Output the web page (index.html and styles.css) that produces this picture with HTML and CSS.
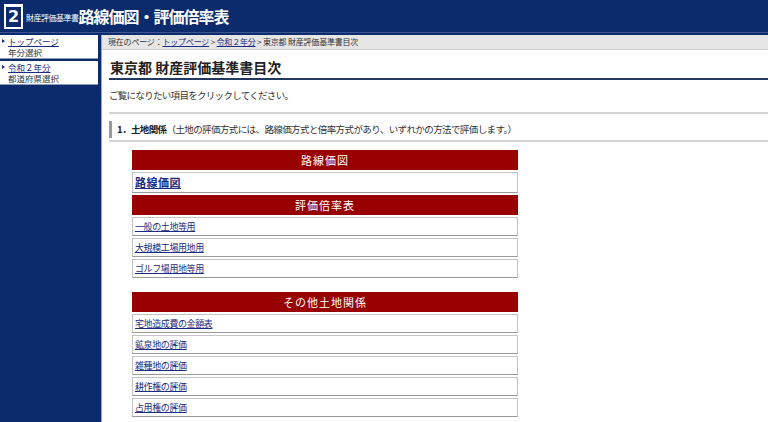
FILE: index.html
```html
<!DOCTYPE html>
<html>
  <head>
    <meta charset="utf-8">
    <title>東京都 財産評価基準書目次</title>
    <link rel="stylesheet" href="styles.css">
  </head>
  <body>
    <div class="header">
      <span class="logo">2</span>
      <span class="subtitle">財産評価基準書</span>
      <span class="title">路線価図・評価倍率表</span>
    </div>

    <div class="wrap">
      <div class="side">
        <div class="navbox">
          <a href="#">トップページ</a>
          <span>年分選択</span>
        </div>
        <div class="navbox">
          <a href="#">令和２年分</a>
          <span>都道府県選択</span>
        </div>
      </div>

      <div class="main">
        <div class="crumb">
          現在のページ：<a href="#">トップページ</a> &gt; <a href="#">令和２年分</a> &gt; 東京都 財産評価基準書目次
        </div>
        <div class="body">
          <h1>東京都 財産評価基準書目次</h1>
          <p class="lead">ご覧になりたい項目をクリックしてください。</p>
          <h2><b>1．土地関係</b>（土地の評価方式には、路線価方式と倍率方式があり、いずれかの方法で評価します。）</h2>

          <div class="group">
            <div class="cap">路線価図</div>
            <div class="row big"><a href="#">路線価図</a></div>
            <div class="cap">評価倍率表</div>
            <div class="row"><a href="#">一般の土地等用</a></div>
            <div class="row"><a href="#">大規模工場用地用</a></div>
            <div class="row"><a href="#">ゴルフ場用地等用</a></div>
          </div>

          <div class="group">
            <div class="cap">その他土地関係</div>
            <div class="row"><a href="#">宅地造成費の金額表</a></div>
            <div class="row"><a href="#">鉱泉地の評価</a></div>
            <div class="row"><a href="#">雑種地の評価</a></div>
            <div class="row"><a href="#">耕作権の評価</a></div>
            <div class="row"><a href="#">占用権の評価</a></div>
          </div>
        </div>
      </div>
    </div>
  </body>
</html>
```

FILE: styles.css
```css
html, body {
  margin: 0;
  padding: 0;
  height: 100%;
}

body {
  background: #0b2b6c;
  font-family: "Noto Sans CJK JP", "Noto Sans", sans-serif;
  color: #333;
  overflow: hidden;
}

a { color: #1a2b80; }

.header {
  height: 33px;
  border-bottom: 1px solid #3a5590;
  display: flex;
  align-items: center;
  color: #fff;
  padding-left: 4px;
  box-sizing: border-box;
}
.header .logo {
  width: 15px;
  height: 20px;
  border: 2px solid #fff;
  border-top-width: 3px;
  font: bold 16px/20px "DejaVu Sans", sans-serif;
  text-align: center;
  margin-right: 3px;
}
.header .subtitle { font-size: 8px; letter-spacing: -0.5px; margin-top: 3px; }
.header .title    { font-size: 16px; font-weight: bold; letter-spacing: -1px; }

.wrap {
  display: flex;
  padding-top: 2px;
  height: calc(100% - 35px);
}

.side {
  width: 98px;
  flex: none;
}
.navbox {
  background: #fff;
  border-bottom: 1px solid #8a98b8;
  margin-bottom: 2px;
  padding: 1px 0 0 8px;
  font-size: 8.5px;
  line-height: 11px;
  position: relative;
}
.navbox:before {
  content: "";
  position: absolute;
  left: 2px;
  top: 4px;
  border: 2px solid transparent;
  border-left: 3px solid #1a2b80;
}
.navbox a, .navbox span { display: block; }

.main {
  flex: 1;
  margin-left: 3px;
  background: #fff;
  border-left: 1px solid #9aa;
}
.crumb {
  background: #e6e6e6;
  border-bottom: 1px solid #ccc;
  font-size: 8px;
  line-height: 14px;
  padding-left: 6px;
  letter-spacing: -0.2px;
}
.body { padding: 0 0 0 7px; }

h1 {
  margin: 6px 0 0;
  font-size: 14px;
  line-height: 22px;
  border-bottom: 2px solid #23395f;
  padding-left: 1px;
  color: #222;
}
.lead {
  margin: 8px 0 0;
  font-size: 9.5px;
  letter-spacing: -0.7px;
  line-height: 15px;
  padding-bottom: 9px;
  border-bottom: 2px solid #d4d4d4;
}
h2 {
  font-size: 9.5px;
  letter-spacing: -0.6px;
  font-weight: normal;
  margin: 7px 0 0;
  line-height: 17px;
  border-left: 3px solid #999;
  padding-left: 5px;
  position: relative;
}
h2 b { color: #222; }
h2:after {
  content: "";
  position: absolute;
  left: -3px;
  right: 0;
  bottom: -4px;
  border-bottom: 2px solid #d4d4d4;
}

.group {
  width: 386px;
  margin: 12px 0 0 23px;
  display: flex;
  flex-direction: column;
  gap: 2px;
}
.group + .group { margin-top: 14px; }
.cap {
  background: #990000;
  color: #fff;
  text-align: center;
  font-size: 11px;
  letter-spacing: 1px;
  line-height: 20px;
}
.row {
  border: 1px solid #c4c4c4;
  border-bottom-color: #999;
  font-size: 9px;
  letter-spacing: -0.4px;
  line-height: 17px;
  padding-left: 2px;
}
.row.big {
  font-size: 11px;
  font-weight: bold;
  letter-spacing: 0.5px;
  line-height: 19px;
}
```
